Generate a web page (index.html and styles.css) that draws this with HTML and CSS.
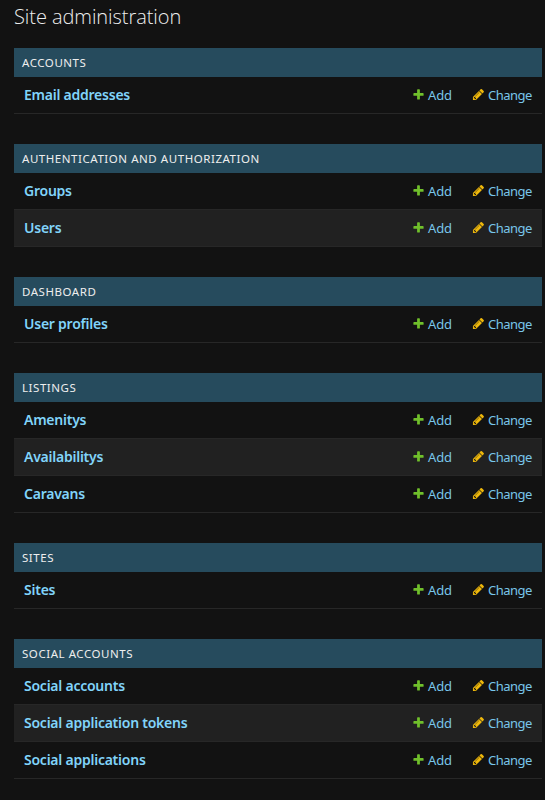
FILE: index.html
```
<!DOCTYPE html>
<html lang="en">
<head>
<meta charset="utf-8">
<title>Site administration</title>
<link rel="stylesheet" href="styles.css">
</head>
<body>
<svg class="sprite" aria-hidden="true">
  <symbol id="plus" viewBox="0 0 1792 1792"><path d="M1600 796v192q0 40-28 68t-68 28h-416v416q0 40-28 68t-68 28h-192q-40 0-68-28t-28-68v-416h-416q-40 0-68-28t-28-68v-192q0-40 28-68t68-28h416v-416q0-40 28-68t68-28h192q40 0 68 28t28 68v416h416q40 0 68 28t28 68z"/></symbol>
  <symbol id="pencil" viewBox="0 0 1792 1792"><path d="M491 1536l91-91-235-235-91 91v107h128v128h107zm523-928q0-22-22-22-10 0-17 7l-542 542q-7 7-7 17 0 22 22 22 10 0 17-7l542-542q7-7 7-17zm-54-192l416 416-832 832h-416v-416zm683 96q0 53-37 90l-166 166-416-416 166-165q36-38 90-38 53 0 91 38l235 234q37 39 37 91z"/></symbol>
</svg>
<main id="content"></main>
<script src="app.js"></script>
</body>
</html>
```
FILE: app.js
```
const apps = [
  ["Accounts", ["Email addresses"]],
  ["Authentication and Authorization", ["Groups", "Users"]],
  ["Dashboard", ["User profiles"]],
  ["Listings", ["Amenitys", "Availabilitys", "Caravans"]],
  ["Sites", ["Sites"]],
  ["Social Accounts", ["Social accounts", "Social application tokens", "Social applications"]]
];
const link = (kind, icon, label) =>
  `<a class="action ${kind}"><svg class="icon"><use href="#${icon}"/></svg><span>${label}</span></a>`;
const row = name =>
  `<div class="row"><a class="model"><span>${name}</span></a>${link("add", "plus", "Add")}${link("change", "pencil", "Change")}</div>`;
document.getElementById("content").innerHTML =
  `<h1><span>Site administration</span></h1>` +
  apps.map(([app, models]) =>
    `<section class="module"><h2><span>${app}</span></h2>${models.map(row).join("")}</section>`).join("");
```
FILE: styles.css
```
* { box-sizing: border-box; }
body {
  margin: 0;
  background: #121212;
  color: #eee;
  font-family: "Noto Sans", "Open Sans", sans-serif;
}
.sprite { display: none; }
#content { padding: 4px 3px 0 14px; }
h1 {
  margin: 0 0 18px;
  height: 26px;
  font: 300 20px/26px "Open Sans", "Noto Sans", sans-serif;
  letter-spacing: -0.07px;
}
.module { margin-bottom: 30px; }
h2 {
  margin: 0;
  height: 29px;
  padding: 0 8px;
  background: #264b5d;
  font-size: 11.5px;
  font-weight: 400;
  line-height: 29px;
  letter-spacing: 0.55px;
  text-transform: uppercase;
}
.row {
  display: flex;
  height: 37px;
  padding: 0 10px;
  border-bottom: 1px solid #272727;
  line-height: 36px;
}
.row:nth-child(odd) { background: #212121; }
.model {
  flex: 1;
  color: #81d4fa;
  font-size: 14px;
  font-weight: 600;
  letter-spacing: -0.24px;
}
.action {
  display: flex;
  align-items: center;
  gap: 3px;
  color: #79c6ea;
  font-size: 13px;
  white-space: nowrap;
}
.add { width: 60px; letter-spacing: -0.1px; }
.change { width: 60px; letter-spacing: -0.5px; }
.icon { width: 13px; height: 13px; flex: none; margin-bottom: 1px; }
.add .icon { fill: #70bf2b; }
.change .icon { fill: #efb80b; }
```
